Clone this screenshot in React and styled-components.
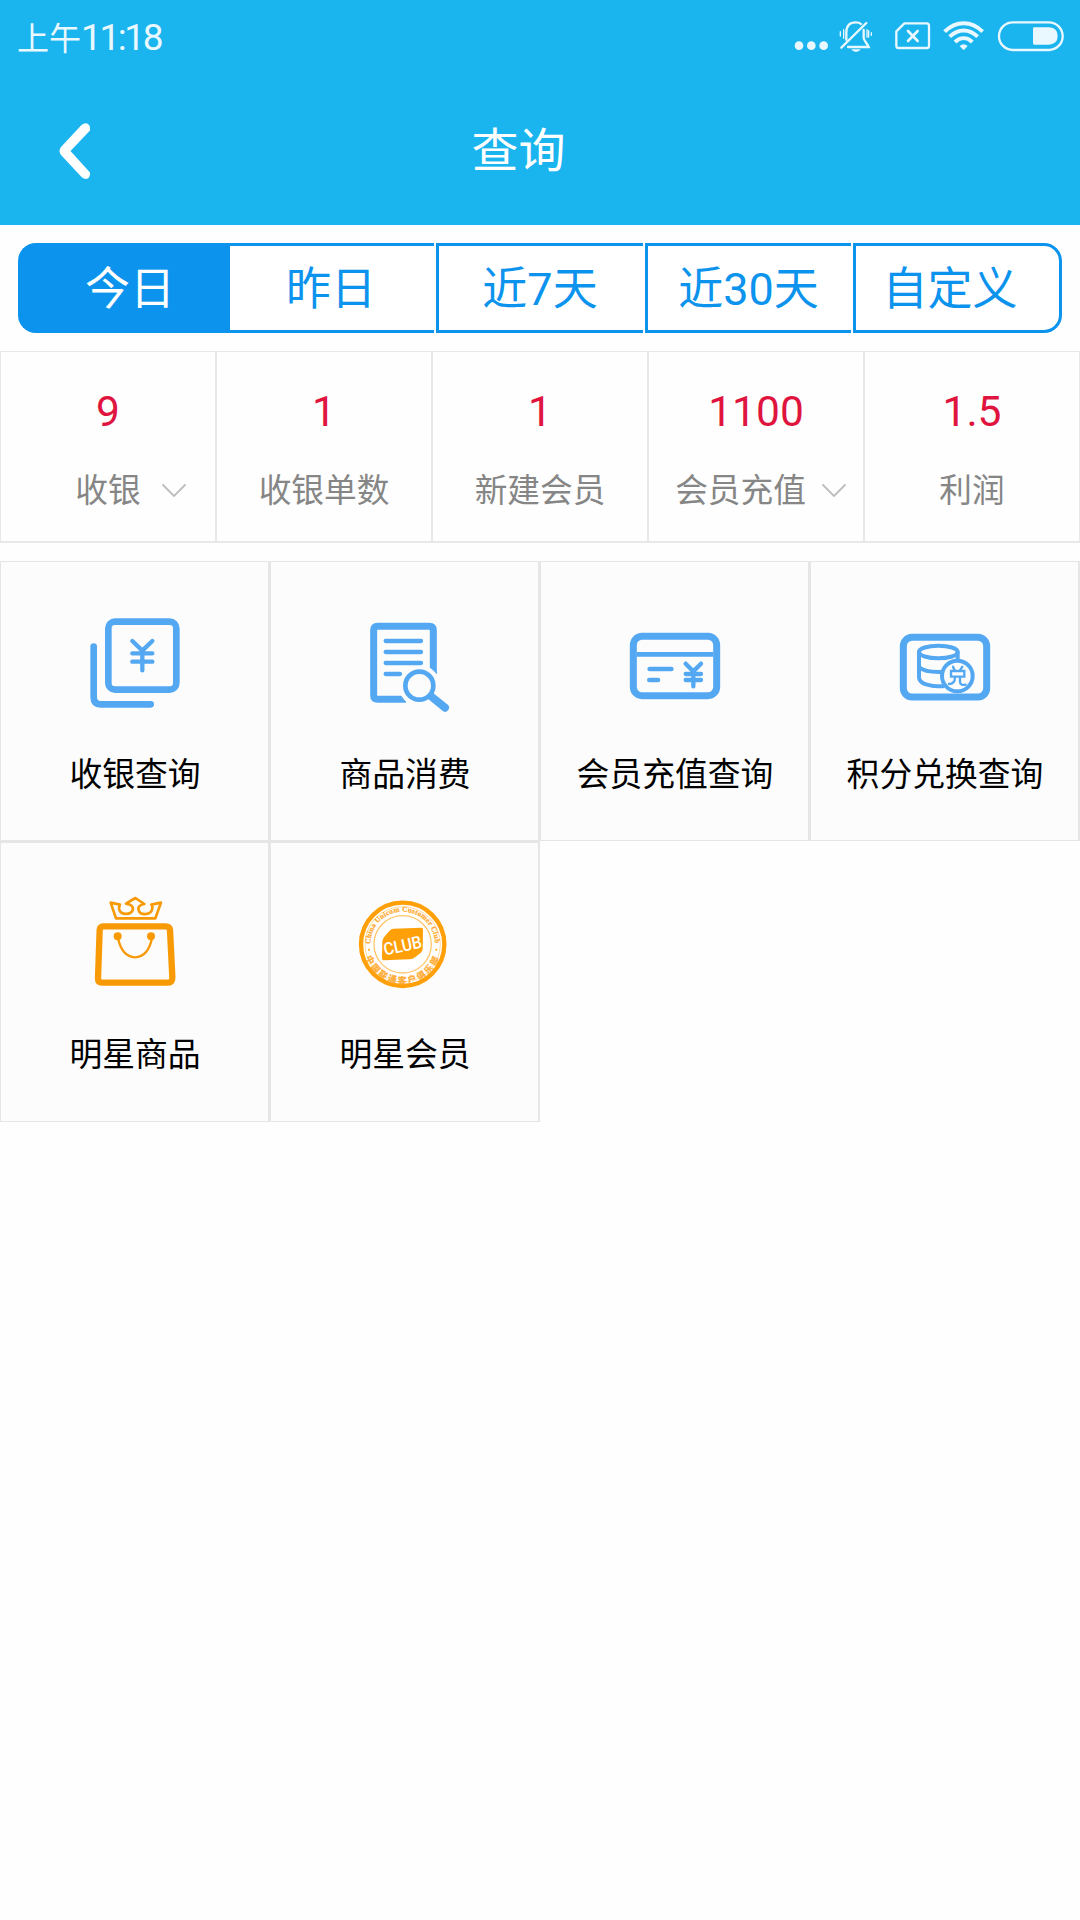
import React from "react";
import styled, { createGlobalStyle } from "styled-components";

const GlobalStyle = createGlobalStyle`
  * { box-sizing: border-box; }
  body {
    margin: 0;
    background: #fff;
    font-family: Roboto, "Noto Sans CJK SC", sans-serif;
  }
`;

const Screen = styled.div`
  width: 1080px;
  min-height: 1920px;
  display: flex;
  flex-direction: column;
  background: #fefefe;
`;

const Header = styled.header`
  height: 225px;
  background: #1ab4ef;
  color: #fff;
  display: flex;
  flex-direction: column;
`;

const StatusBar = styled.div`
  height: 80px;
  padding: 0 15px 0 17px;
  display: flex;
  align-items: center;
  justify-content: space-between;
  color: #e8f8fe;
`;

const Clock = styled.div`
  display: flex;
  align-items: baseline;
  padding-bottom: 4px;
  font-size: 32px;
  line-height: 48px;
`;

const Digits = styled.span`
  font-size: 37px;
  letter-spacing: -2.4px;
`;

const StatusIcons = styled.div`
  display: flex;
  align-items: center;
`;

const StatusGlyph = styled.svg`
  width: ${(p) => p.$w}px;
  height: 60px;
  margin-left: ${(p) => p.$gap || 0}px;
  display: block;
`;

const NavBar = styled.div`
  height: 145px;
  padding-bottom: 4px;
  display: grid;
  grid-template-columns: 120px 1fr 163px;
  align-items: center;
`;

const BackButton = styled.button`
  border: 0;
  padding: 0 0 0 56px;
  background: none;
  display: flex;
`;

const Title = styled.h1`
  margin: 0;
  text-align: center;
  font-size: 47px;
  line-height: 70px;
  font-weight: 400;
`;

const Tabs = styled.nav`
  margin: 18px 18px 0;
  height: 90px;
  display: grid;
  grid-template-columns: 209px 209px 209px 208px 209px;
`;

const Tab = styled.button`
  font: inherit;
  font-size: 45px;
  font-weight: 400;
  line-height: 60px;
  color: ${(p) => (p.$active ? "#fff" : "#0b93ee")};
  background: ${(p) => (p.$active ? "#0b93ee" : "#fff")};
  border: 3px solid #0b93ee;
  border-right-width: ${(p) => (p.$last ? 3 : 0)}px;
  margin-right: ${(p) => (p.$active || p.$last ? 0 : 2)}px;
  border-radius: ${(p) => (p.$active ? "18px 0 0 18px" : p.$last ? "0 18px 18px 0" : "0")};
  padding: 4px ${(p) => (p.$last ? 15 : p.$active ? 0 : 2)}px 0 ${(p) => (p.$active ? 12 : 0)}px;
  display: flex;
  align-items: center;
  justify-content: center;
  white-space: nowrap;
`;

const Stats = styled.section`
  margin-top: 18px;
  display: grid;
  grid-template-columns: repeat(5, 216px);
`;

const Stat = styled.div`
  height: 192px;
  border: 1px solid #e8e8e8;
  border-bottom-width: 2px;
  padding-top: 35px;
  display: flex;
  flex-direction: column;
  align-items: center;
`;

const StatValue = styled.div`
  font-size: 42.5px;
  line-height: 50px;
  color: #df1540;
`;

const StatLabel = styled.div`
  margin-top: 30px;
  height: 48px;
  display: flex;
  align-items: center;
  gap: ${(p) => p.$gap || 0}px;
  padding-left: ${(p) => p.$shift || 0}px;
  font-size: 32.7px;
  line-height: 48px;
  color: #868686;
  white-space: nowrap;
`;

const Grid = styled.section`
  margin-top: 18px;
  display: grid;
  grid-template-columns: repeat(4, 270px);
`;

const Tile = styled.div`
  height: ${(p) => (p.$lower ? 281 : 280)}px;
  border: 1px solid #e6e6e6;
  border-right-width: 2px;
  border-top-width: ${(p) => (p.$lower ? 2 : 1)}px;
  background: #fcfcfc;
  padding-top: ${(p) => (p.$lower ? 45 : 46)}px;
  padding-left: 1px;
  display: flex;
  flex-direction: column;
  align-items: center;
`;

const TileIcon = styled.svg`
  width: 110px;
  height: 110px;
  display: block;
  overflow: visible;
`;

const TileLabel = styled.div`
  margin-top: 33px;
  font-size: 32.8px;
  line-height: 48px;
  color: #000;
  white-space: nowrap;
`;

const blue = "#54a8f2";
const orange = "#f79a05";

const Chevron = () => (
  <svg width="26" height="16" viewBox="0 0 26 16" fill="none" stroke="#bdbdbd" strokeWidth="1.8">
    <path d="M1.5 1.5 13 13 24.500 1.500" />
  </svg>
);

const CashierIcon = () => (
  <TileIcon viewBox="60 54 330 330" fill="none" stroke={blue} strokeLinecap="round">
    <rect x="145" y="95" width="204" height="204" rx="20" strokeWidth="20" />
    <path d="M101 170V322Q101 343 122 343H272" strokeWidth="20" />
    <path d="M217 153 247 182 277 153M217 190H277M217 215H277M247 184V241" strokeWidth="13" />
  </TileIcon>
);

const GoodsIcon = () => (
  <TileIcon viewBox="60 54 330 330" fill="none" stroke={blue} strokeLinecap="round">
    <path
      d="M310 252V121Q310 109 298 109H143Q131 109 131 121V316Q131 328 143 328H228"
      strokeWidth="21"
      strokeLinecap="butt"
    />
    <circle cx="268" cy="287" r="62" fill="#fcfcfc" stroke="none" />
    <path d="M167 153H273M167 186H273M167 219H273M167 252H210" strokeWidth="13" />
    <path d="M302 318 345 353" strokeWidth="24" />
    <circle cx="268" cy="287" r="42" strokeWidth="14" fill="#fcfcfc" />
  </TileIcon>
);

const CardIcon = () => (
  <TileIcon viewBox="240 24 330 330" fill="none" stroke={blue} strokeLinecap="round">
    <rect x="280" y="109" width="250" height="178" rx="26" strokeWidth="21" />
    <path d="M290 163H520" strokeWidth="14" strokeLinecap="butt" />
    <path d="M329 207H394M328 240H354" strokeWidth="14" />
    <path d="M437 191 460 214 483 191M437 222H483M437 240H483M460 215V259" strokeWidth="13" />
  </TileIcon>
);

const PointsIcon = () => (
  <TileIcon viewBox="240 24 330 330" fill="none" stroke={blue} strokeLinecap="round">
    <rect x="280" y="112" width="250" height="179" rx="26" strokeWidth="21" />
    <ellipse cx="385" cy="156" rx="58" ry="19" strokeWidth="12" />
    <path d="M327 156V232C328 250 355 259 399 259M327 202C340 213 365 217 394 216M443 157V182" strokeWidth="12" />
    <circle cx="442" cy="228" r="46" strokeWidth="12" fill="#fcfcfc" />
    <path
      d="M429 200 434 211M457 200 450 211M423 213H463V230H423ZM435 231Q435 252 417 252M450 231V245Q450 257 467 254"
      strokeWidth="7"
    />
  </TileIcon>
);

const BagIcon = () => (
  <TileIcon viewBox="60 54 330 330" fill="none" stroke={orange} strokeLinejoin="round">
    <path
      d="M152 98 168 145H286L303 98 274 104C280 110 277 116 275 122 268 135 242 136 237 123 232 112 237 105 253 102L226 84 198 101C214 103 221 110 218 121 211 135 185 135 179 122 176 115 177 109 180 104Z"
      strokeWidth="8"
    />
    <path
      d="M130 169H317Q329 169 330 180L337 321Q338 338 324 338H126Q114 338 114 325L119 180Q120 169 130 169Z"
      strokeWidth="19"
    />
    <circle cx="173" cy="199" r="12" fill={orange} stroke="none" />
    <circle cx="273" cy="199" r="12" fill={orange} stroke="none" />
    <path d="M174 204C182 242 197 261 225 262C249 261 268 244 276 204" strokeWidth="7" />
  </TileIcon>
);

const ArcText = styled.text`
  font-family: "Liberation Serif", "Noto Sans CJK SC", serif;
  font-size: ${(p) => p.$size}px;
  font-weight: 700;
  fill: #ffab33;
  stroke: #ffab33;
  stroke-width: 0.8px;
`;

const ClubText = styled.text`
  font-family: Roboto, sans-serif;
  font-size: 52px;
  font-weight: 500;
  fill: #fff;
`;

const ClubIcon = () => (
  <TileIcon viewBox="60 24 330 330" fill="none" stroke="#ffa009">
    <defs>
      <path id="arcTop" d="M121 192A97 97 0 0 1 315 192" />
      <path id="arcBottom" d="M104 220A117 117 0 0 0 332 220" />
    </defs>
    <circle cx="218" cy="193" r="125" fill="#fff" strokeWidth="13" />
    <circle cx="218" cy="193" r="113" strokeWidth="2" stroke="#ffc66b" />
    <circle cx="218" cy="193" r="86" strokeWidth="4" stroke="#ffc66b" />
    <circle cx="117" cy="209" r="3" fill="#ffa009" stroke="none" />
    <circle cx="319" cy="209" r="3" fill="#ffa009" stroke="none" />
    <path
      d="M191 146 274 143Q279 143 279 149L278 208Q277 215 271 220L252 234Q246 238 237 238L163 241Q156 241 156 233L157 184Q158 174 165 168L178 153Q184 146 191 146Z"
      fill="#ffa009"
      stroke="none"
    />
    <ClubText x="218" y="215" textAnchor="middle" textLength="116" lengthAdjust="spacingAndGlyphs" transform="rotate(-12 218 197)" stroke="none">
      CLUB
    </ClubText>
    <ArcText $size={22}>
      <textPath href="#arcTop" startOffset="0" textLength="302">China Unicom Customer Club</textPath>
    </ArcText>
    <ArcText $size={26}>
      <textPath href="#arcBottom" startOffset="12" textLength="286">中国联通客户俱乐部</textPath>
    </ArcText>
  </TileIcon>
);

const StatusGlyphs = () => (
  <StatusIcons>
    <StatusGlyph $w={35} viewBox="42 0 105 180" fill="currentColor">
      <circle cx="57" cy="107" r="13" />
      <circle cx="94" cy="107" r="13" />
      <circle cx="131" cy="107" r="13" />
    </StatusGlyph>
    <StatusGlyph $w={35} $gap={9} viewBox="174 0 105 180" fill="none" stroke="currentColor" strokeWidth="7" strokeLinecap="round">
      <path d="M184 113 259 39" />
      <path d="M199 89V68C199 46 211 37 227 37C233 37 239 38 243 42M251 60V84C252 94 262 100 266 111H204" />
      <path d="M191 59V85M181 65V78M261 59V82M266 62V81M274 68V76" strokeWidth="4" />
      <path d="M214 118H242Q237 126 228 126T214 118Z" fill="currentColor" stroke="none" />
    </StatusGlyph>
    <StatusGlyph $w={37} $gap={21} viewBox="342 0 111 180" fill="none" stroke="currentColor" strokeWidth="7" strokeLinecap="round">
      <path d="M373 40H440Q447 40 447 47V107Q447 114 440 114H356Q349 114 349 107V64Z" strokeLinejoin="round" />
      <path d="M384 63 413 93M413 63 384 93" strokeWidth="8" />
    </StatusGlyph>
    <StatusGlyph $w={41} $gap={12} viewBox="489 0 123 180" fill="none" stroke="currentColor" strokeWidth="12">
      <path d="M494 65C527 31 575 31 608 65M509 80C534 55 568 55 593 80M525 96C541 81 561 81 577 96" />
      <path d="M539 108Q551 97 563 108L554 118Q551 121 548 118Z" fill="currentColor" stroke="none" />
    </StatusGlyph>
    <StatusGlyph $w={68} $gap={13} viewBox="651 0 204 180" fill="none" stroke="currentColor" strokeWidth="7">
      <rect x="657" y="37" width="191" height="83" rx="41.500" />
      <path d="M763 52H808Q833 54 833 78T808 104H763Q759 104 759 100V56Q759 52 763 52Z" fill="currentColor" stroke="none" />
    </StatusGlyph>
  </StatusIcons>
);

const tabs = ["今日", "昨日", "近7天", "近30天", "自定义"];

const stats = [
  { value: "9", label: "收银", gap: 20, shift: 46, chevron: true },
  { value: "1", label: "收银单数" },
  { value: "1", label: "新建会员" },
  { value: "1100", label: "会员充值", gap: 15, shift: 10, chevron: true },
  { value: "1.5", label: "利润" },
];

const tiles = [
  { label: "收银查询", Icon: CashierIcon },
  { label: "商品消费", Icon: GoodsIcon },
  { label: "会员充值查询", Icon: CardIcon },
  { label: "积分兑换查询", Icon: PointsIcon },
  { label: "明星商品", Icon: BagIcon },
  { label: "明星会员", Icon: ClubIcon },
];

export default function App() {
  return (
    <Screen>
      <GlobalStyle />
      <Header>
        <StatusBar>
          <Clock>
            上午<Digits>11:18</Digits>
          </Clock>
          <StatusGlyphs />
        </StatusBar>
        <NavBar>
          <BackButton aria-label="返回">
            <svg width="38" height="60" viewBox="0 0 38 60">
              <path
                d="M3.500 30Q3.500 28 5 26L25.500 4Q29 1.200 32 3Q34 4.500 34 7V9.500L14.500 30 34 51.500V54Q33.500 57 30.500 58Q27.500 58 25.500 56L5 34Q3.500 32 3.500 30Z"
                fill="#fff"
              />
            </svg>
          </BackButton>
          <Title>查询</Title>
        </NavBar>
      </Header>
      <Tabs>
        {tabs.map((label, i) => (
          <Tab key={label} $active={i === 0} $last={i === tabs.length - 1}>
            {label}
          </Tab>
        ))}
      </Tabs>
      <Stats>
        {stats.map((s) => (
          <Stat key={s.label}>
            <StatValue>{s.value}</StatValue>
            <StatLabel $gap={s.gap} $shift={s.shift}>
              {s.label}
              {s.chevron && <Chevron />}
            </StatLabel>
          </Stat>
        ))}
      </Stats>
      <Grid>
        {tiles.map(({ label, Icon }, i) => (
          <Tile key={label} $lower={i >= 4}>
            <Icon />
            <TileLabel>{label}</TileLabel>
          </Tile>
        ))}
      </Grid>
    </Screen>
  );
}
